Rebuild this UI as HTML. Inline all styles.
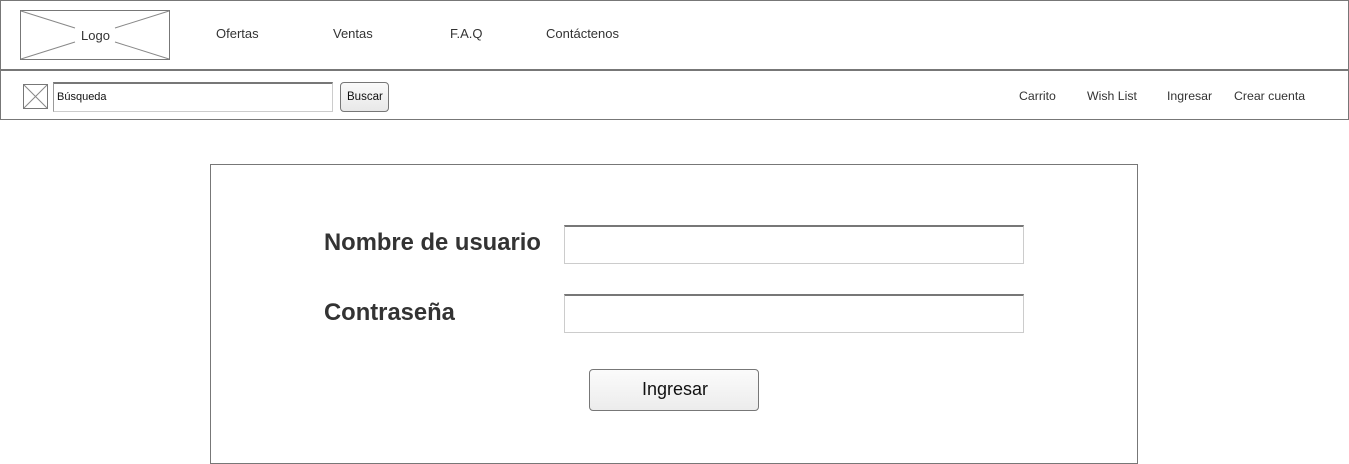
<!DOCTYPE html>
<html><head><meta charset="utf-8"><style>
body{margin:0;width:1349px;height:464px;background:#fff;position:relative;overflow:hidden;font-family:"Liberation Sans",Arial,sans-serif;color:#222}
.a{position:absolute;box-sizing:border-box}
.t{position:absolute;font-size:13px;color:#333;white-space:nowrap}
</style></head><body>
<div class="a" style="left:0;top:0;width:1349px;height:71px;border:1px solid #777;border-bottom:2px solid #777"></div>
<div class="a" style="left:0;top:70px;width:1349px;height:50px;border:1px solid #777;border-top:none"></div>
<svg class="a" style="left:20px;top:10px" width="150" height="50"><rect x="0.5" y="0.5" width="149" height="49" fill="#fff" stroke="#777"/><path d="M1 1L55 18M149 1L95 18M1 49L55 32M149 49L95 32" stroke="#888" fill="none"/></svg>
<div class="t" style="left:81px;top:28px;font-size:13px">Logo</div>
<div class="t" style="left:216px;top:26px">Ofertas</div>
<div class="t" style="left:333px;top:26px">Ventas</div>
<div class="t" style="left:450px;top:26px">F.A.Q</div>
<div class="t" style="left:546px;top:26px">Contáctenos</div>
<svg class="a" style="left:23px;top:84px" width="25" height="25"><rect x="0.5" y="0.5" width="24" height="24" fill="#fff" stroke="#777"/><path d="M1 1L24 24M24 1L1 24" stroke="#888"/></svg>
<div class="a" style="left:53px;top:82px;width:280px;height:30px;border:1px solid #ccc;border-top:2px solid #777;border-left:1px solid #999"></div>
<div class="t" style="left:57px;top:91px;font-size:11px;color:#111">Búsqueda</div>
<div class="a" style="left:340px;top:82px;width:49px;height:30px;border:1px solid #777;border-radius:4px;background:linear-gradient(#fafafa,#e8e8e8)"></div>
<div class="t" style="left:347px;top:91px;font-size:11.5px;color:#111">Buscar</div>
<div class="t" style="left:1019px;top:89px;font-size:12.3px">Carrito</div>
<div class="t" style="left:1087px;top:89px;font-size:12.3px">Wish List</div>
<div class="t" style="left:1167px;top:89px;font-size:12.3px">Ingresar</div>
<div class="t" style="left:1234px;top:89px;font-size:12.3px">Crear cuenta</div>
<div class="a" style="left:210px;top:164px;width:928px;height:300px;border:1px solid #777"></div>
<div class="t" style="left:324px;top:229px;font-size:23.8px;font-weight:bold;color:#333">Nombre de usuario</div>
<div class="t" style="left:324px;top:299px;font-size:23.8px;font-weight:bold;color:#333">Contraseña</div>
<div class="a" style="left:564px;top:225px;width:460px;height:39px;border:1px solid #ccc;border-top:2px solid #777"></div>
<div class="a" style="left:564px;top:294px;width:460px;height:39px;border:1px solid #ccc;border-top:2px solid #777"></div>
<div class="a" style="left:589px;top:369px;width:170px;height:42px;border:1px solid #777;border-radius:4px;background:linear-gradient(#fbfbfb,#ececec)"></div>
<div class="t" style="left:590px;top:379px;width:170px;text-align:center;font-size:18px;color:#111">Ingresar</div>
</body></html>
